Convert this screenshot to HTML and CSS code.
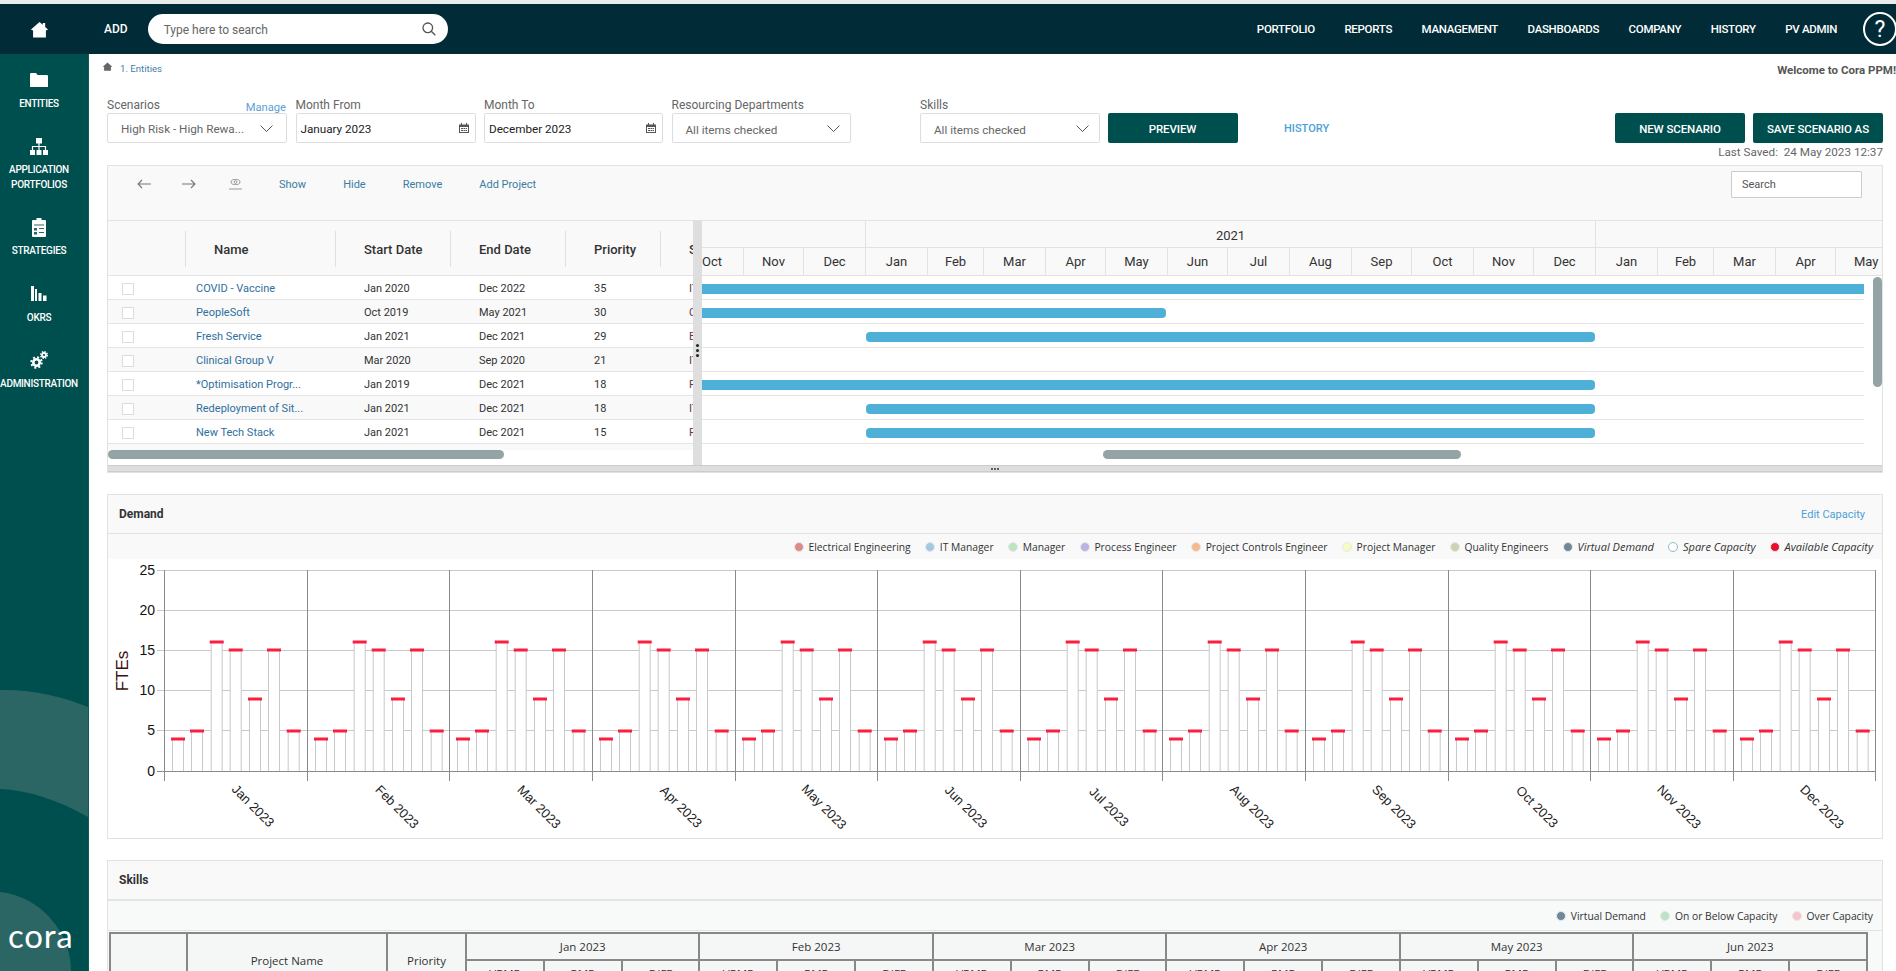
FILE: index.html
```html
<!DOCTYPE html>
<html lang="en">
<head>
<meta charset="utf-8">
<title>Cora PPM</title>
<link rel="stylesheet" href="styles.css">
</head>
<body>
<header class="topbar">
  <a class="home-cell" href="#" aria-label="Home">
    <svg class="i-home" viewBox="0 0 18 17"><path d="M9 0.5 12.5 3.6V1.5H15V5.8L18 8.6 16.8 9.4H15.8V17H2.2V9.4H1.2L0 8.6Z"/></svg>
  </a>
  <a class="add" href="#">ADD</a>
  <div class="search-pill">
    <span class="search-text">Type here to search</span>
    <svg class="i-search" viewBox="0 0 14 14"><circle cx="5.8" cy="5.8" r="4.8"/><path d="M9.3 9.3 13.3 13.3"/></svg>
  </div>
  <nav class="topnav">
    <a href="#">PORTFOLIO</a><a href="#">REPORTS</a><a href="#">MANAGEMENT</a><a href="#">DASHBOARDS</a><a href="#">COMPANY</a><a href="#">HISTORY</a><a href="#">PV ADMIN</a>
  </nav>
  <span class="help">?</span>
</header>

<div class="app">
  <aside class="sidebar">
    <svg class="side-deco" viewBox="0 0 88 917"><path d="M0 636C30 635 62 642 88 653V763C58 746 28 736 0 735Z"/><path d="M0 838C40 842 71 878 71 917H0Z"/></svg>
    <a class="side-item" href="#">
      <span class="side-icon"><svg class="i-folder" viewBox="0 0 18 14"><path d="M0 1.2Q0 0 1.2 0H6L7.6 2H16.8Q18 2 18 3.2V14H0Z"/></svg></span>
      <span class="side-label">ENTITIES</span>
    </a>
    <a class="side-item" href="#">
      <span class="side-icon"><svg class="i-site" viewBox="0 0 18 17"><rect x="6" width="6" height="5.5"/><rect y="12" width="5" height="5"/><rect x="6.5" y="12" width="5" height="5"/><rect x="13" y="12" width="5" height="5"/><path class="wire" d="M2.5 12V8.5H15.5V12M9 5V12"/></svg></span>
      <span class="side-label tight">APPLICATION PORTFOLIOS</span>
    </a>
    <a class="side-item" href="#">
      <span class="side-icon"><svg class="i-clip" viewBox="0 0 14 19"><rect y="2" width="14" height="17" rx="1"/><rect x="4.5" width="5" height="3"/><path class="cut" d="M2 6.5H12V7.5H2ZM2 10H5V12.5H2ZM7 10H12V11H7ZM2 14H5V16.5H2ZM7 14H12V15H7Z"/></svg></span>
      <span class="side-label">STRATEGIES</span>
    </a>
    <a class="side-item" href="#">
      <span class="side-icon"><svg class="i-bars" viewBox="0 0 16 15"><rect width="3" height="15"/><rect x="4" y="3" width="2" height="12"/><rect x="7.5" y="7" width="3" height="8"/><rect x="12" y="9.5" width="3.5" height="5.5"/></svg></span>
      <span class="side-label">OKRS</span>
    </a>
    <a class="side-item" href="#">
      <span class="side-icon"><svg class="i-gears" viewBox="0 0 18 18"><circle class="gear-hub" cx="6.5" cy="11.5" r="3.2"/><circle class="gear-teeth" cx="6.5" cy="11.5" r="5.2"/><circle class="gear-hub small" cx="14" cy="4" r="2"/><circle class="gear-teeth small" cx="14" cy="4" r="3.3"/></svg></span>
      <span class="side-label">ADMINISTRATION</span>
    </a>
    <span class="brand">cora</span>
  </aside>

  <main class="main">
    <div class="crumbs">
      <svg class="i-crumb" viewBox="0 0 18 17"><path d="M9 0.5 18 8.6 16.8 9.4H15.8V17H2.2V9.4H1.2L0 8.6Z"/></svg>
      <a class="crumb-link" href="#">1. Entities</a>
      <span class="welcome">Welcome to Cora PPM!</span>
    </div>

    <div class="filters">
      <div class="field w180">
        <div class="field-label"><span>Scenarios</span><a class="manage" href="#">Manage</a></div>
        <div class="control pick"><span class="val muted">High Risk - High Rewa...</span><svg class="i-chev" viewBox="0 0 13 7"><path d="M0.5 0.5 6.5 6.5 12.5 0.5"/></svg></div>
      </div>
      <div class="field w180">
        <div class="field-label"><span>Month From</span></div>
        <div class="control date"><span class="val">January 2023</span><svg class="i-cal" viewBox="0 0 10 10"><path d="M0 1.5H2V0H3V1.5H7V0H8V1.5H10V10H0ZM1 4V9H9V4ZM2 5H4V6H2ZM4.5 5H6.5V6H4.5ZM7 5H8V6H7ZM2 7H4V8H2ZM4.5 7H6.5V8H4.5ZM7 7H8V8H7Z"/></svg></div>
      </div>
      <div class="field w179">
        <div class="field-label"><span>Month To</span></div>
        <div class="control date"><span class="val">December 2023</span><svg class="i-cal" viewBox="0 0 10 10"><path d="M0 1.5H2V0H3V1.5H7V0H8V1.5H10V10H0ZM1 4V9H9V4ZM2 5H4V6H2ZM4.5 5H6.5V6H4.5ZM7 5H8V6H7ZM2 7H4V8H2ZM4.5 7H6.5V8H4.5ZM7 7H8V8H7Z"/></svg></div>
      </div>
      <div class="field w179">
        <div class="field-label"><span>Resourcing Departments</span></div>
        <div class="control multi"><span class="val muted">All items checked</span><svg class="i-chev" viewBox="0 0 13 7"><path d="M0.5 0.5 6.5 6.5 12.5 0.5"/></svg></div>
      </div>
      <div class="field w180 skills-field">
        <div class="field-label"><span>Skills</span></div>
        <div class="control multi"><span class="val muted">All items checked</span><svg class="i-chev" viewBox="0 0 13 7"><path d="M0.5 0.5 6.5 6.5 12.5 0.5"/></svg></div>
      </div>
      <button class="btn preview">PREVIEW</button>
      <a class="history" href="#">HISTORY</a>
      <div class="actions">
        <button class="btn">NEW SCENARIO</button>
        <button class="btn">SAVE SCENARIO AS</button>
      </div>
    </div>
    <div class="saved">Last Saved: &nbsp;24 May 2023 12:37</div>

    <section class="panel gantt-panel">
      <div class="toolbar">
        <svg class="i-arrow" viewBox="0 0 14 10"><path d="M14 5H1M5 1 1 5 5 9"/></svg>
        <svg class="i-arrow next" viewBox="0 0 14 10"><path d="M0 5H13M9 1 13 5 9 9"/></svg>
        <svg class="i-eye" viewBox="0 0 13 11"><ellipse cx="6.5" cy="3" rx="4.5" ry="2.6"/><circle cx="6.5" cy="3" r="1.4"/><path d="M0 10H13"/></svg>
        <a class="tool first" href="#">Show</a>
        <a class="tool" href="#">Hide</a>
        <a class="tool" href="#">Remove</a>
        <a class="tool" href="#">Add Project</a>
        <div class="tool-search">Search</div>
      </div>
      <div class="board">
        <div class="grid">
          <div class="g-row g-head">
            <div class="gc c0"></div>
            <div class="gc c1"><span>Name</span></div>
            <div class="gc c2"><span>Start Date</span></div>
            <div class="gc c3"><span>End Date</span></div>
            <div class="gc c4"><span>Priority</span></div>
            <div class="gc c5"><span>Status</span></div>
          </div>
          <div class="g-row"><div class="gc c0"><i class="check"></i></div><div class="gc c1"><a href="#">COVID - Vaccine</a></div><div class="gc c2">Jan 2020</div><div class="gc c3">Dec 2022</div><div class="gc c4">35</div><div class="gc c5">IT</div></div>
          <div class="g-row"><div class="gc c0"><i class="check"></i></div><div class="gc c1"><a href="#">PeopleSoft</a></div><div class="gc c2">Oct 2019</div><div class="gc c3">May 2021</div><div class="gc c4">30</div><div class="gc c5">Corp</div></div>
          <div class="g-row"><div class="gc c0"><i class="check"></i></div><div class="gc c1"><a href="#">Fresh Service</a></div><div class="gc c2">Jan 2021</div><div class="gc c3">Dec 2021</div><div class="gc c4">29</div><div class="gc c5">Eng</div></div>
          <div class="g-row"><div class="gc c0"><i class="check"></i></div><div class="gc c1"><a href="#">Clinical Group V</a></div><div class="gc c2">Mar 2020</div><div class="gc c3">Sep 2020</div><div class="gc c4">21</div><div class="gc c5">IT</div></div>
          <div class="g-row"><div class="gc c0"><i class="check"></i></div><div class="gc c1"><a href="#">*Optimisation Progr...</a></div><div class="gc c2">Jan 2019</div><div class="gc c3">Dec 2021</div><div class="gc c4">18</div><div class="gc c5">Fin</div></div>
          <div class="g-row"><div class="gc c0"><i class="check"></i></div><div class="gc c1"><a href="#">Redeployment of Sit...</a></div><div class="gc c2">Jan 2021</div><div class="gc c3">Dec 2021</div><div class="gc c4">18</div><div class="gc c5">IT</div></div>
          <div class="g-row"><div class="gc c0"><i class="check"></i></div><div class="gc c1"><a href="#">New Tech Stack</a></div><div class="gc c2">Jan 2021</div><div class="gc c3">Dec 2021</div><div class="gc c4">15</div><div class="gc c5">Fin</div></div>
          <div class="hscroll"><div class="thumb t-left"></div></div>
        </div>
        <div class="splitter"><i class="grip"></i></div>
        <div class="gantt">
          <div class="years"><div class="yr y-a"></div><div class="yr y-b">2021</div><div class="yr y-c"></div></div>
          <div class="months">
            <div class="mo clip-start w41">Oct</div><div class="mo d60">Nov</div><div class="mo d62">Dec</div><div class="mo d62">Jan</div><div class="mo d56">Feb</div><div class="mo d62">Mar</div><div class="mo d60">Apr</div><div class="mo d62">May</div><div class="mo d60">Jun</div><div class="mo d62">Jul</div><div class="mo d62">Aug</div><div class="mo d60">Sep</div><div class="mo d62">Oct</div><div class="mo d60">Nov</div><div class="mo d62">Dec</div><div class="mo d62">Jan</div><div class="mo d56">Feb</div><div class="mo d62">Mar</div><div class="mo d60">Apr</div><div class="mo clip-end w48">May</div>
          </div>
          <div class="g-line"><i class="gbar square" style="width:1162px"></i></div>
          <div class="g-line"><i class="gbar" style="width:464px"></i></div>
          <div class="g-line"><i class="gbar" style="margin-left:164px;width:729px"></i></div>
          <div class="g-line"></div>
          <div class="g-line"><i class="gbar" style="width:893px"></i></div>
          <div class="g-line"><i class="gbar" style="margin-left:164px;width:729px"></i></div>
          <div class="g-line"><i class="gbar" style="margin-left:164px;width:729px"></i></div>
          <div class="hscroll"><div class="thumb t-right"></div></div>
          <div class="vthumb"></div>
        </div>
      </div>
      <div class="band"><i class="grip flat"></i></div>
    </section>

    <section class="panel demand">
      <div class="panel-head"><h2>Demand</h2><a class="edit" href="#">Edit Capacity</a></div>
      <div class="legend">
        <span class="lg"><i class="dot c-ee"></i>Electrical Engineering</span>
        <span class="lg"><i class="dot c-it"></i>IT Manager</span>
        <span class="lg"><i class="dot c-mg"></i>Manager</span>
        <span class="lg"><i class="dot c-pe"></i>Process Engineer</span>
        <span class="lg"><i class="dot c-pc"></i>Project Controls Engineer</span>
        <span class="lg"><i class="dot c-pm"></i>Project Manager</span>
        <span class="lg"><i class="dot c-qe"></i>Quality Engineers</span>
        <span class="lg em"><i class="dot c-vd"></i>Virtual Demand</span>
        <span class="lg em"><i class="dot c-sc"></i>Spare Capacity</span>
        <span class="lg em"><i class="dot c-ac"></i>Available Capacity</span>
      </div>
      <svg class="chart" viewBox="0 0 1774 279" width="1774" height="279">
        <defs>
          <g id="month">
            <path class="bar" d="M8 212V180H19V212"/><rect class="cap" x="6.5" y="178.5" width="14" height="3"/>
            <path class="bar" d="M27 212V172H38V212"/><rect class="cap" x="25.5" y="170.5" width="14" height="3"/>
            <path class="bar" d="M46.700 212V83H57.700V212"/><rect class="cap" x="45.200" y="81.500" width="14" height="3"/>
            <path class="bar" d="M65.700 212V91H76.700V212"/><rect class="cap" x="64.200" y="89.500" width="14" height="3"/>
            <path class="bar" d="M85 212V140H96V212"/><rect class="cap" x="83.500" y="138.500" width="14" height="3"/>
            <path class="bar" d="M104 212V91H115V212"/><rect class="cap" x="102.500" y="89.500" width="14" height="3"/>
            <path class="bar" d="M123.700 212V172H134.700V212"/><rect class="cap" x="122.200" y="170.500" width="14" height="3"/>
          </g>
        </defs>
        <path class="gridline" d="M49 11.500H1768M49 51.500H1768M49 91.500H1768M49 131.500H1768M49 171.500H1768"/>
        <path class="axis" d="M49 212.500H1768"/>
        <use href="#month" x="56.500"/><use href="#month" x="199.500"/><use href="#month" x="341.500"/><use href="#month" x="484.500"/><use href="#month" x="627.500"/><use href="#month" x="769.500"/><use href="#month" x="912.500"/><use href="#month" x="1054.500"/><use href="#month" x="1197.500"/><use href="#month" x="1340.500"/><use href="#month" x="1482.500"/><use href="#month" x="1625.500"/>
        <path class="axis" d="M56.500 11V222M199.500 11V222M341.500 11V222M484.500 11V222M627.500 11V222M769.500 11V222M912.500 11V222M1054.500 11V222M1197.500 11V222M1340.500 11V222M1482.500 11V222M1625.500 11V222M1767.500 11V222"/>
        <g class="ytick">
          <text x="47" y="16">25</text><text x="47" y="56">20</text><text x="47" y="96">15</text><text x="47" y="136">10</text><text x="47" y="176">5</text><text x="47" y="217">0</text>
        </g>
        <text class="ytitle" transform="translate(20 112) rotate(-90)">FTEs</text>
        <g class="xtick">
          <text transform="translate(142 250) rotate(45)">Jan 2023</text>
          <text transform="translate(286 251) rotate(45)">Feb 2023</text>
          <text transform="translate(428 251) rotate(45)">Mar 2023</text>
          <text transform="translate(570 251) rotate(45)">Apr 2023</text>
          <text transform="translate(713 251) rotate(45)">May 2023</text>
          <text transform="translate(855 251) rotate(45)">Jun 2023</text>
          <text transform="translate(998 251) rotate(45)">Jul 2023</text>
          <text transform="translate(1141 251) rotate(45)">Aug 2023</text>
          <text transform="translate(1283 251) rotate(45)">Sep 2023</text>
          <text transform="translate(1426 251) rotate(45)">Oct 2023</text>
          <text transform="translate(1568 251) rotate(45)">Nov 2023</text>
          <text transform="translate(1711 251) rotate(45)">Dec 2023</text>
        </g>
      </svg>
    </section>

    <section class="panel skills">
      <div class="panel-head tall"><h2>Skills</h2></div>
      <div class="legend plain">
        <span class="lg"><i class="dot c-vd"></i>Virtual Demand</span>
        <span class="lg"><i class="dot c-mg"></i>On or Below Capacity</span>
        <span class="lg"><i class="dot c-oc"></i>Over Capacity</span>
      </div>
      <table class="skill-table">
        <thead>
          <tr>
            <th rowspan="2" class="col-a"></th><th rowspan="2" class="col-b">Project Name</th><th rowspan="2" class="col-c">Priority</th>
            <th colspan="3">Jan 2023</th><th colspan="3">Feb 2023</th><th colspan="3">Mar 2023</th><th colspan="3">Apr 2023</th><th colspan="3">May 2023</th><th colspan="3">Jun 2023</th>
          </tr>
          <tr>
            <th>VRMP</th><th>RMP</th><th>DIFF</th><th>VRMP</th><th>RMP</th><th>DIFF</th><th>VRMP</th><th>RMP</th><th>DIFF</th><th>VRMP</th><th>RMP</th><th>DIFF</th><th>VRMP</th><th>RMP</th><th>DIFF</th><th>VRMP</th><th>RMP</th><th>DIFF</th>
          </tr>
        </thead>
      </table>
    </section>
  </main>
</div>
</body>
</html>
```
FILE: styles.css
```css
* { box-sizing: border-box; }
html, body { margin: 0; height: 971px; overflow: hidden; background: #fff; }
body { font-family: Roboto, "Liberation Sans", sans-serif; color: #333; font-size: 12px; }
a { text-decoration: none; color: inherit; }
svg { display: block; }

/* top bar */
.topbar { height: 54px; border-top: 4px solid #e9ecec; background: #012b36; display: flex; align-items: center; color: #fff; overflow: hidden; }
.home-cell { width: 78px; flex: none; display: flex; justify-content: center; }
.i-home { width: 17px; height: 17px; fill: #fff; }
.add { margin-left: 26px; font-weight: 500; font-size: 12px; }
.search-pill { margin-left: 20px; width: 300px; height: 30px; border-radius: 15px; background: #fff; display: flex; align-items: center; justify-content: space-between; padding: 0 12px 0 16px; }
.search-text { color: #666; font-size: 12px; padding-top: 1px; }
.i-search { width: 14px; height: 14px; fill: none; stroke: #555; stroke-width: 1.3; }
.topnav { margin-left: auto; display: flex; gap: 29.5px; font-size: 11.5px; font-weight: 500; letter-spacing: -0.3px; }
.help { flex: none; margin-left: 26px; margin-right: -1px; width: 34px; height: 34px; border: 2px solid #fff; border-radius: 50%; display: flex; align-items: center; justify-content: center; font-size: 23px; }

/* layout */
.app { display: flex; height: 917px; }
.sidebar { position: relative; width: 89px; flex: none; background: #004f4f; border-right: 1px solid #0a5a5a; color: #fff; padding-top: 16px; display: flex; flex-direction: column; gap: 25.5px; overflow: hidden; }
.side-deco { position: absolute; left: 0; top: 0; width: 88px; height: 917px; fill: #2b6664; }
.side-item { position: relative; width: 78px; display: flex; flex-direction: column; align-items: center; }
.side-icon { height: 20px; margin-bottom: 6px; display: flex; align-items: center; justify-content: center; }
.side-label { font-size: 10px; font-weight: 500; line-height: 15px; text-align: center; letter-spacing: -0.3px; white-space: normal; }
.side-label.tight { margin-top: -1px; }
.i-folder { width: 18px; height: 14px; fill: #fff; }
.i-site { width: 18px; height: 17px; fill: #fff; }
.i-site .wire { fill: none; stroke: #fff; stroke-width: 1.2; }
.i-clip { width: 14px; height: 19px; fill: #fff; }
.i-clip .cut { fill: #2b6664; }
.i-bars { width: 16px; height: 15px; fill: #fff; }
.i-gears { width: 18px; height: 18px; fill: none; stroke: #fff; }
.gear-hub { stroke-width: 2.6; }
.gear-hub.small { stroke-width: 1.8; }
.gear-teeth { stroke-width: 2; stroke-dasharray: 2 2.08; }
.gear-teeth.small { stroke-width: 1.4; stroke-dasharray: 1.5 1.09; }
.brand { position: absolute; left: 8px; top: 863px; font-family: Lato, sans-serif; font-size: 33px; line-height: 36px; letter-spacing: 0.8px; color: #fff; }

.main { flex: 1; min-width: 0; padding: 0 13px 0 18px; overflow: hidden; }
.crumbs { height: 28px; margin: 0 -13px 0 -4px; display: flex; align-items: center; font-size: 9.6px; }
.i-crumb { width: 9px; height: 9px; fill: #666; margin-right: 8px; margin-top: -3px; }
.crumb-link { color: #3f7fa8; }
.welcome { margin-left: auto; font-weight: 700; font-size: 11.5px; color: #555; margin-top: 3px; }

/* filters */
.filters { margin-top: 15px; display: flex; align-items: flex-end; gap: 8.5px; }
.field { display: flex; flex-direction: column; flex: none; }
.w180 { width: 180px; }
.w179 { width: 179px; }
.skills-field { margin-left: 61px; }
.field-label { height: 16px; line-height: 16px; display: flex; justify-content: space-between; color: #666; font-size: 12px; white-space: nowrap; }
.manage { color: #5d9fd8; font-size: 11.2px; padding-top: 3px; margin-right: 1px; }
.control { height: 30px; border: 1px solid #ddd; border-radius: 2px; display: flex; align-items: center; justify-content: space-between; font-size: 11.7px; background: #fff; }
.val { color: #222; padding-top: 1px; }
.val.muted { color: #666; }
.multi .val { padding-top: 3px; }
.pick { padding: 0 13px 0 13px; }
.date { padding: 0 6px 0 4px; }
.multi { padding: 0 10px 0 13px; }
.i-chev { width: 13px; height: 7px; fill: none; stroke: #555; }
.i-cal { width: 10px; height: 10px; fill: #555; }
.btn { flex: none; width: 130px; height: 30px; border: 0; border-radius: 2px; background: #004f4f; color: #fff; font: 500 11.5px Roboto, sans-serif; letter-spacing: -0.1px; padding: 1px 0 0; }
.preview { margin-left: -1px; }
.history { flex: none; align-self: center; margin-top: 16px; margin-left: 38px; color: #4d9fd8; font-size: 11px; font-weight: 500; }
.actions { margin-left: auto; display: flex; gap: 8px; }
.saved { height: 22px; line-height: 18px; text-align: right; color: #666; font-size: 11.7px; }

/* panels */
.panel { border: 1px solid #e2e2e2; background: #fff; }
.gantt-panel { width: 1776px; }
.toolbar { height: 55px; padding: 5px 0 23px 29px; background: #f9f9f9; border-bottom: 1px solid #e2e2e2; display: flex; align-items: center; }
.i-arrow { width: 14px; height: 10px; fill: none; stroke: #777; stroke-width: 1.1; }
.i-arrow.next { margin-left: 31px; }
.i-eye { width: 13px; height: 11px; margin-left: 33px; fill: none; stroke: #999; stroke-width: 1; }
.tool { color: #3d7ba3; font-size: 11px; margin-left: 37px; }
.tool-search { margin-left: auto; margin-right: 20px; width: 131px; height: 27px; border: 1px solid #ccc; border-radius: 1px; background: #fff; color: #555; font-size: 11px; line-height: 25px; padding-left: 10px; }

.board { display: flex; height: 244px; }
.grid { width: 585px; flex: none; overflow: hidden; }
.g-row { display: flex; height: 24px; padding-top: 2px; align-items: center; border-bottom: 1px solid #e4e4e4; font-size: 11px; color: #333; }
.g-row:nth-child(odd) { background: #f9f9f9; }
.gc { flex: none; padding-left: 29px; white-space: nowrap; overflow: hidden; }
.gc a { color: #2f6f9e; }
.c0 { width: 77px; padding-left: 14px; display: flex; }
.c1 { width: 150px; padding-left: 11px; }
.c2, .c3 { width: 115px; }
.c4 { width: 95px; }
.c5 { width: 33px; color: #5a3a50; }
.g-head { height: 55px; padding-top: 2px; background: #f9f9f9; font-size: 13px; font-weight: 500; color: #333; }
.g-head .gc { height: 36px; line-height: 38px; border-left: 1px solid #e0e0e0; padding-left: 28px; }
.g-head .c0 { border-left: 0; }
.g-head .c5 { color: #333; }
.check { width: 12px; height: 12px; border: 1px solid #ddd; background: #fff; }
.hscroll { height: 21px; padding-top: 6px; }
.grid .hscroll { background: linear-gradient(#f9f9f9 6px, #fff 6px); }
.thumb { height: 9px; border-radius: 5px; background: #94a3a3; }
.t-left { width: 396px; }
.t-right { width: 358px; margin-left: 401px; }
.splitter { width: 9px; flex: none; background: #dedede; display: flex; align-items: center; justify-content: center; padding-top: 15px; position: relative; }
.grip { width: 3px; height: 3px; border-radius: 50%; background: #222; box-shadow: 0 -5px #222, 0 5px #222; }
.gantt { position: relative; flex: 1; min-width: 0; overflow: hidden; }
.years { height: 27px; display: flex; background: #f9f9f9; border-bottom: 1px solid #e2e2e2; }
.yr { flex: none; text-align: center; font-size: 13px; font-weight: 400; line-height: 29px; }
.y-a { width: 163px; }
.y-b { width: 730px; border-left: 1px solid #e2e2e2; }
.y-c { width: 288px; border-left: 1px solid #e2e2e2; }
.months { height: 28px; display: flex; background: #f9f9f9; border-bottom: 1px solid #e2e2e2; }
.mo { flex: none; text-align: center; font-size: 13px; line-height: 28px; border-left: 1px solid #e2e2e2; color: #333; }
.d60 { width: 60px; }
.d62 { width: 62px; }
.d56 { width: 56px; }
.w41 { width: 41px; }
.w48 { width: 48px; }
.clip-start { border-left: 0; text-align: left; }
.clip-end { text-align: left; padding-left: 18px; }
.g-line { width: 1162px; height: 24px; padding-top: 3px; display: flex; align-items: center; border-bottom: 1px solid #e4e4e4; }
.gbar { height: 10px; background: #4fb0d7; border-radius: 0 4px 4px 0; }
.gbar[style*="margin-left"] { border-radius: 4px; }
.gbar.square { border-radius: 0; }
.vthumb { position: absolute; right: 0; top: 56px; width: 9px; height: 110px; border-radius: 5px; background: #94a3a3; }
.band { height: 7px; background: #dedede; border-top: 1px solid #ccc; border-bottom: 1px solid #ccc; display: flex; justify-content: center; align-items: center; }
.grip.flat { width: 2px; height: 2px; box-shadow: -3px 0 #333, 3px 0 #333; background: #333; }

.demand { margin-top: 21px; width: 1776px; height: 345px; }
.panel-head { height: 39px; display: flex; align-items: center; justify-content: space-between; padding: 0 17px 0 11px; background: #f9f9f9; border-bottom: 1px solid #e2e2e2; }
.panel-head h2 { margin: 0; font-size: 12px; font-weight: 700; color: #333; }
.edit { color: #4d9fd8; font-size: 11px; }
.legend { height: 25px; padding-right: 9px; display: flex; justify-content: flex-end; align-items: center; gap: 14.6px; background: #f9f9f9; font: 10.3px "Open Sans", "Noto Sans", sans-serif; color: #333; }
.lg { display: flex; align-items: center; gap: 4.5px; white-space: nowrap; }
.lg.em { font-style: italic; font-size: 11px; }
.dot { width: 10px; height: 10px; border-radius: 50%; border: 1px solid #e8e8e8; }
.c-ee { background: #dc8a8a; }
.c-it { background: #a6c8de; }
.c-mg { background: #bbe3c4; }
.c-pe { background: #bab3e4; }
.c-pc { background: #f5b98f; }
.c-pm { background: #f7fbc6; }
.c-qe { background: #cfd2b4; }
.c-vd { background: #6f889a; }
.c-sc { background: #fff; border-color: #8fbcc4; }
.c-ac { background: #e80f2c; }
.c-oc { background: #f5c4cd; }

.chart { width: 1774px; height: 279px; }
.gridline { stroke: #c9c9c9; stroke-width: 1; fill: none; }
.axis { stroke: #8a8a8a; stroke-width: 1; fill: none; }
.bar { fill: #fff; stroke: #c9c9c9; stroke-width: 1; }
.cap { fill: #fb1f3f; }
.ytick text { font: 14px "Liberation Sans", sans-serif; fill: #111; text-anchor: end; }
.ytitle { font: 17px "Liberation Sans", sans-serif; fill: #3a1010; text-anchor: middle; }
.xtick text { font: 13px "Liberation Sans", sans-serif; fill: #222; text-anchor: middle; }

.skills { margin-top: 21px; width: 1776px; background: #f8f9f9; }
.tall { height: 40px; border-bottom: 2px solid #e4e4e4; }
.legend.plain { height: 30px; background: #f8f9f9; border-bottom: 1px solid #e4e4e4; }
.skill-table { margin: 1px 0 0 1px; width: 1759px; table-layout: fixed; border-collapse: collapse; background: #f5f7f7; font: 11.5px "Open Sans", "Noto Sans", sans-serif; color: #333; }
.skill-table th { height: 27px; padding: 0; font-weight: 400; text-align: center; border: 2px solid #888; }
.col-a { width: 77px; }
.col-b { width: 200px; }
.col-c { width: 79px; }
```
